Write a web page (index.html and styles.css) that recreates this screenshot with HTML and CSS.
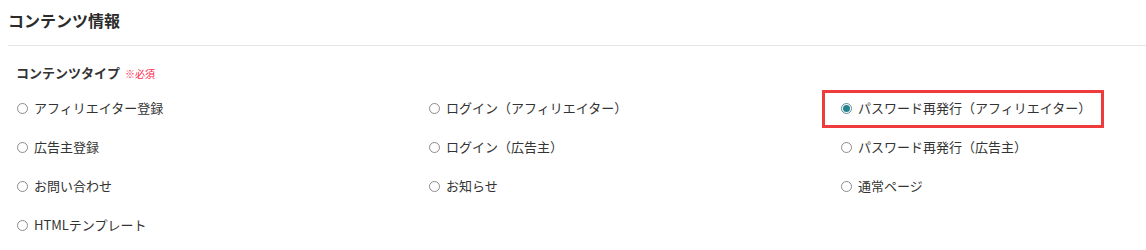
FILE: index.html
```html
<!DOCTYPE html>
<html lang="ja">
<head>
    <meta charset="UTF-8">
    <title>コンテンツ情報</title>
    <link rel="stylesheet" href="styles.css">
</head>
<body>
    <div class="section">
        <h2 class="section-title">コンテンツ情報</h2>

        <div class="field">
            <div class="field-label">コンテンツタイプ<span class="required">※必須</span></div>

            <div class="radio-grid">
                <label class="radio"><span class="radio-mark"></span>アフィリエイター登録</label>
                <label class="radio"><span class="radio-mark"></span>ログイン（アフィリエイター）</label>
                <label class="radio checked">
                    <span class="radio-mark"></span>パスワード再発行（アフィリエイター）
                    <span class="highlight"></span>
                </label>

                <label class="radio"><span class="radio-mark"></span>広告主登録</label>
                <label class="radio"><span class="radio-mark"></span>ログイン（広告主）</label>
                <label class="radio"><span class="radio-mark"></span>パスワード再発行（広告主）</label>

                <label class="radio"><span class="radio-mark"></span>お問い合わせ</label>
                <label class="radio"><span class="radio-mark"></span>お知らせ</label>
                <label class="radio"><span class="radio-mark"></span>通常ページ</label>

                <label class="radio"><span class="radio-mark"></span>HTMLテンプレート</label>
            </div>
        </div>
    </div>
</body>
</html>
```

FILE: styles.css
```css
/* コンテンツ情報フォーム */
body {
    margin: 0;
    padding: 0;
    background-color: #fff;
    color: #333;
    font-family: "Noto Sans CJK JP", "Noto Sans", sans-serif;
}
.section {
    padding-left: 8px;
}
.section-title {
    margin: 0;
    padding: 8px 0 13px;
    font-size: 16px;
    line-height: 24px;
    font-weight: bold;
    color: #2b2b2b;
    border-bottom: 1px solid #e6e6e6;
}
.field {
    padding: 17px 8px 0;
}
.field-label {
    font-size: 13px;
    line-height: 20px;
    font-weight: bold;
    margin-bottom: 14px;
}
.required {
    margin-left: 5px;
    font-size: 10px;
    font-weight: normal;
    color: #ff1f4b;
}
.radio-grid {
    display: grid;
    grid-template-columns: 412px 412px 1fr;
    grid-auto-rows: 20px;
    row-gap: 19px;
    margin-left: 1px;
}
.radio {
    position: relative;
    display: flex;
    align-items: center;
    font-size: 13px;
    line-height: 20px;
    white-space: nowrap;
    cursor: pointer;
}
.radio-mark {
    box-sizing: border-box;
    width: 11px;
    height: 11px;
    margin-right: 6px;
    border: 1px solid #8c8c8c;
    border-radius: 50%;
    display: flex;
    justify-content: center;
    align-items: center;
}
.checked .radio-mark {
    border-color: #5c8f99;
}
.checked .radio-mark::after {
    content: "";
    width: 7px;
    height: 7px;
    border-radius: 50%;
    background-color: #24838e;
}
.highlight {
    position: absolute;
    left: -19px;
    top: -8px;
    width: 282px;
    height: 38px;
    box-sizing: border-box;
    border: 3px solid #ee3b3b;
    pointer-events: none;
}
```
